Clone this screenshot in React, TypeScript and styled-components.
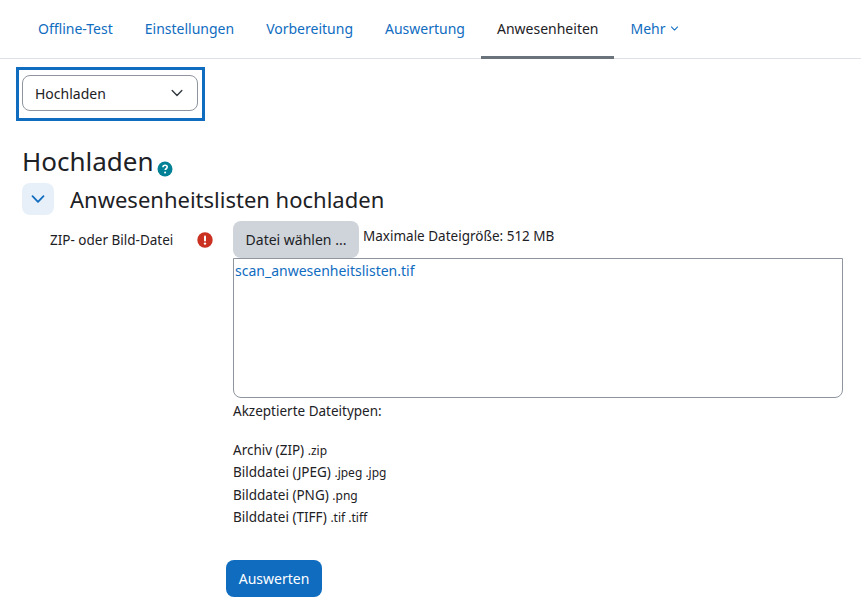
import React from 'react';
import styled, { createGlobalStyle } from 'styled-components';

const GlobalStyle = createGlobalStyle`
  html, body {
    margin: 0;
    padding: 0;
    background: #fff;
    color: #1d2125;
    font-family: 'Noto Sans', 'Open Sans', sans-serif;
    font-size: 14px;
  }
`;

const Page = styled.div`
  width: 861px;
  height: 613px;
  overflow: hidden;
`;

const Tabs = styled.nav`
  display: flex;
  height: 58px;
  padding-left: 22px;
  border-bottom: 1px solid #dee2e6;
`;

const Tab = styled.a<{ $active?: boolean }>`
  display: flex;
  align-items: center;
  gap: 4px;
  height: 56px;
  padding: 0 16px;
  font-size: 14px;
  color: ${(p) => (p.$active ? '#1d2125' : '#0f6cbf')};
  border-bottom: ${(p) => (p.$active ? '3px solid #6a737b' : '3px solid transparent')};
`;

const Body = styled.main`
  padding: 8px 18px 0 16px;
`;

const JumpFrame = styled.div`
  box-sizing: border-box;
  display: flex;
  width: 189px;
  height: 54px;
  padding: 5px 3px;
  border: 3px solid #0f6cbf;
`;

const JumpSelect = styled.div`
  box-sizing: border-box;
  display: flex;
  align-items: center;
  justify-content: space-between;
  width: 176px;
  height: 36px;
  padding: 0 13px 0 12px;
  border: 1px solid #8f959e;
  border-radius: 8px;
  font-size: 14px;
`;

const PageTitle = styled.h2`
  display: flex;
  align-items: flex-end;
  gap: 3px;
  margin: 22px 0 0 6px;
  height: 36px;
  font-size: 26px;
  font-weight: 400;
  line-height: 36px;
`;

const SectionHeader = styled.div`
  display: flex;
  align-items: center;
  gap: 16px;
  margin: 4px 0 0 6px;
  height: 32px;
`;

const Collapse = styled.span`
  display: flex;
  align-items: center;
  justify-content: center;
  width: 32px;
  height: 32px;
  border-radius: 8px;
  background: #e7f0f9;
`;

const SectionTitle = styled.h3`
  margin: 0;
  font-size: 22px;
  font-weight: 400;
`;

const FormRow = styled.div`
  display: flex;
  margin-top: 6px;
`;

const LabelCell = styled.div`
  display: flex;
  align-items: center;
  justify-content: space-between;
  box-sizing: border-box;
  width: 217px;
  height: 37px;
  padding: 0 20px 0 34px;
  font-size: 13.5px;
`;

const FieldCell = styled.div`
  width: 610px;
  font-size: 13.5px;
`;

const PickerRow = styled.div`
  display: flex;
  align-items: flex-start;
  gap: 4px;
`;

const ChooseButton = styled.button`
  width: 126px;
  height: 37px;
  padding: 0;
  border: 0;
  border-radius: 8px;
  background: #ced4da;
  color: #1d2125;
  font: inherit;
  font-size: 14px;
`;

const MaxSize = styled.span`
  margin-top: 6px;
`;

const DropZone = styled.div`
  box-sizing: border-box;
  height: 140px;
  padding: 2px 0 0 1px;
  border: 1px solid #8f959e;
  border-top-left-radius: 0;
  border-radius: 0 0 8px 8px;
  color: #0f6cbf;
  font-size: 14px;
`;

const AcceptedTitle = styled.div`
  margin-top: 3px;
  line-height: 20px;
`;

const TypeList = styled.ul`
  margin: 18px 0 0;
  padding: 0;
  list-style: none;
`;

const TypeItem = styled.li`
  height: 22.4px;
  line-height: 22.4px;
`;

const Extension = styled.small`
  font-size: 12px;
`;

const Submit = styled.button`
  display: block;
  width: 96px;
  height: 37px;
  margin: 31px 0 0 210px;
  padding: 0;
  border: 0;
  border-radius: 8px;
  background: #0f6cbf;
  color: #fff;
  font: inherit;
  font-size: 14px;
`;

const Chevron = ({ size, width, color }: { size: number; width: number; color: string }) => (
  <svg width={size} height={size} viewBox="0 0 16 16" fill="none" stroke={color} strokeWidth={width} strokeLinecap="round" strokeLinejoin="round">
    <path d="M2.5 5.2 8 10.8l5.5-5.6" />
  </svg>
);

const HelpIcon = () => (
  <svg width="16" height="16" viewBox="0 0 16 16">
    <circle cx="8" cy="8" r="7.5" fill="#008196" />
    <path d="M5.9 6.3c0-1.3 1-2.1 2.2-2.1s2.1.8 2.1 1.9c0 1.7-2 1.6-2 3" fill="none" stroke="#fff" strokeWidth="1.6" />
    <circle cx="8.1" cy="11.4" r="1" fill="#fff" />
  </svg>
);

const RequiredIcon = () => (
  <svg width="16" height="16" viewBox="0 0 16 16">
    <circle cx="8" cy="8" r="7.7" fill="#ca3120" />
    <rect x="7" y="3.4" width="2" height="6" rx="1" fill="#fff" />
    <circle cx="8" cy="11.6" r="1.2" fill="#fff" />
  </svg>
);

const types: [string, string][] = [
  ['Archiv (ZIP)', '.zip'],
  ['Bilddatei (JPEG)', '.jpeg .jpg'],
  ['Bilddatei (PNG)', '.png'],
  ['Bilddatei (TIFF)', '.tif .tiff'],
];

export default function App() {
  return (
    <Page>
      <GlobalStyle />
      <Tabs>
        <Tab>Offline-Test</Tab>
        <Tab>Einstellungen</Tab>
        <Tab>Vorbereitung</Tab>
        <Tab>Auswertung</Tab>
        <Tab $active>Anwesenheiten</Tab>
        <Tab>
          Mehr <Chevron size={9} width={1.8} color="#0f6cbf" />
        </Tab>
      </Tabs>
      <Body>
        <JumpFrame>
          <JumpSelect>
            Hochladen
            <Chevron size={14} width={1.6} color="#343a40" />
          </JumpSelect>
        </JumpFrame>
        <PageTitle>
          Hochladen
          <span style={{ height: 30 }}>
            <HelpIcon />
          </span>
        </PageTitle>
        <SectionHeader>
          <Collapse>
            <Chevron size={16} width={1.8} color="#0f6cbf" />
          </Collapse>
          <SectionTitle>Anwesenheitslisten hochladen</SectionTitle>
        </SectionHeader>
        <FormRow>
          <LabelCell>
            ZIP- oder Bild-Datei
            <RequiredIcon />
          </LabelCell>
          <FieldCell>
            <PickerRow>
              <ChooseButton>Datei wählen ...</ChooseButton>
              <MaxSize>Maximale Dateigröße: 512 MB</MaxSize>
            </PickerRow>
            <DropZone>scan_anwesenheitslisten.tif</DropZone>
            <AcceptedTitle>Akzeptierte Dateitypen:</AcceptedTitle>
            <TypeList>
              {types.map(([name, ext]) => (
                <TypeItem key={name}>
                  {name} <Extension>{ext}</Extension>
                </TypeItem>
              ))}
            </TypeList>
          </FieldCell>
        </FormRow>
        <Submit>Auswerten</Submit>
      </Body>
    </Page>
  );
}
